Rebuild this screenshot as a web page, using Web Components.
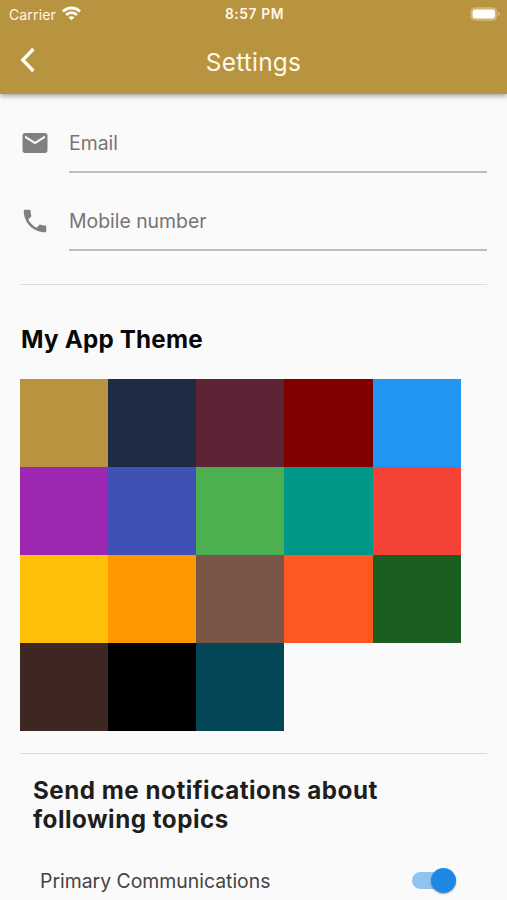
<!DOCTYPE html>
<html lang="en">
<head>
<meta charset="utf-8">
<title>Settings</title>
<style>
  body {
      margin: 0;
      background-color: #fafafa;
      font-family: Inter, "Liberation Sans", sans-serif;
      overflow: hidden;
  }
</style>
</head>
<body>
<settings-page></settings-page>
<script>
function makeTemplate(html) {
    const template = document.createElement("template");
    template.innerHTML = html;
    return template;
}

class BaseElement extends HTMLElement {
    constructor() {
        super();
        this.attachShadow({ mode: "open" });
        this.shadowRoot.append(this.constructor.template.content.cloneNode(true));
    }
}

class StatusBar extends BaseElement {
    static template = makeTemplate(`
        <style>
          :host {
              display: grid;
              grid-template-columns: 1fr auto 1fr;
              align-items: center;
              height: 27px;
              padding: 0 7px 0 9px;
              color: #fff8e8;
              font-size: 14px;
              line-height: 27px;
          }

          .carrier {
              display: flex;
              align-items: center;
              gap: 6px;
              letter-spacing: 0.14px;
          }

          .carrier svg {
              margin-bottom: 1px;
          }

          .time {
              padding-top: 1px;
              font-weight: 600;
              font-size: 13.8px;
              letter-spacing: 0.6px;
          }

          .battery {
              justify-self: end;
              margin-bottom: 1px;
          }

          svg {
              display: block;
          }
        </style>
        <div class="carrier">
          <span>Carrier</span>
          <svg width="19" height="15" viewBox="0 0 19 15" fill="none" stroke="#fffdf4" stroke-width="2.8">
            <path d="M1 5.6C5.8.8 13.2.8 18 5.6"/>
            <path d="M4.1 8.9C7.1 5.9 11.9 5.9 14.9 8.9"/>
            <path d="M9.5 14.2 6.5 11.2C8.1 9.8 10.9 9.8 12.5 11.2Z" fill="#fffdf4" stroke="none"/>
          </svg>
        </div>
        <span class="time">8:57 PM</span>
        <svg class="battery" width="30" height="14" viewBox="0 0 30 14">
          <rect x=".8" y=".7" width="26" height="12.6" rx="4" fill="#d2b373" stroke="#d2b373" stroke-width="1"/>
          <rect x="2.6" y="2.5" width="22.4" height="9" rx="2.4" fill="#fffefa"/>
          <path d="M28.2 5C30.2 5.6 30.2 8.4 28.2 9Z" fill="#d8bf8c"/>
        </svg>
    `);
}

class AppBar extends BaseElement {
    static template = makeTemplate(`
        <style>
          :host {
              display: block;
              height: 94px;
              background-color: #b99440;
              box-shadow: 0 2px 5px rgba(0, 0, 0, 0.36);
          }

          .toolbar {
              display: grid;
              grid-template-columns: 1fr auto 1fr;
              align-items: center;
              height: 67px;
              padding: 0 20px;
              box-sizing: border-box;
          }

          h1 {
              margin: 2px 0 0;
              color: #fffaec;
              font-size: 24.4px;
              font-weight: 400;
              line-height: 30px;
              letter-spacing: 0.25px;
          }

          svg {
              display: block;
              margin-bottom: 2px;
          }
        </style>
        <status-bar></status-bar>
        <div class="toolbar">
          <svg width="16" height="26" viewBox="0 0 16 26" fill="none" stroke="#fffdf5" stroke-width="3.4">
            <path d="M13.4 2 2.8 13 13.4 24"/>
          </svg>
          <h1><slot></slot></h1>
        </div>
    `);
}

class InputField extends BaseElement {
    static template = makeTemplate(`
        <style>
          :host {
              display: flex;
              height: 78px;
          }

          .icon {
              flex: none;
              width: 49px;
              padding-top: 33px;
              box-sizing: border-box;
          }

          .label {
              flex: 1;
              box-sizing: border-box;
              padding-top: 35px;
              border-bottom: 2px solid #bebebe;
              color: #757575;
              font-size: 19.4px;
              line-height: 26px;
          }
        </style>
        <div class="icon"><slot name="icon"></slot></div>
        <div class="label"><slot></slot></div>
    `);
}

class ColorGrid extends BaseElement {
    static template = makeTemplate(`
        <style>
          :host {
              display: grid;
              grid-template-columns: repeat(5, 88.05px);
              grid-auto-rows: 87.9px;
              padding-left: 0.35px;
          }
        </style>
    `);

    connectedCallback() {
        for (const color of this.getAttribute("colors").split(" ")) {
            const swatch = document.createElement("div");
            swatch.style.backgroundColor = color;
            this.shadowRoot.append(swatch);
        }
    }
}

class TopicSwitch extends BaseElement {
    static template = makeTemplate(`
        <style>
          :host {
              display: flex;
              justify-content: space-between;
              align-items: center;
              height: 40px;
              padding: 0 31px 0 20px;
              color: #444;
              font-size: 19.4px;
          }

          .text {
              padding-top: 1px;
          }

          .track {
              display: flex;
              justify-content: flex-end;
              align-items: center;
              width: 44px;
              height: 17px;
              border-radius: 9px;
              background-color: #8fc3f2;
          }

          .thumb {
              width: 25px;
              height: 25px;
              border-radius: 50%;
              background-color: #1e88e5;
              box-shadow: 0 1px 2px rgba(0, 0, 0, 0.35);
          }
        </style>
        <span class="text"><slot></slot></span>
        <div class="track"><div class="thumb"></div></div>
    `);
}

class SettingsPage extends BaseElement {
    static template = makeTemplate(`
        <style>
          :host {
              display: block;
              height: 900px;
              overflow: hidden;
          }

          main {
              padding: 1px 20px 0;
          }

          .icon {
              display: block;
              width: 30px;
              height: 30px;
              fill: #808080;
          }

          hr {
              height: 1px;
              margin: 0;
              border: none;
              background-color: #dcdcdc;
          }

          h2 {
              margin: 0;
              font-size: 24.2px;
              font-weight: 700;
              line-height: 29.4px;
          }

          .theme {
              padding: 40px 0 24px 1px;
              color: #080808;
              line-height: 30px;
              letter-spacing: 0.2px;
          }

          .topics {
              padding: 22px 60px 26px 13px;
              color: #1e1e1e;
              letter-spacing: 0.5px;
          }
        </style>
        <app-bar>Settings</app-bar>
        <main>
          <input-field>
            <svg class="icon" slot="icon" viewBox="0 0 24 24"><path d="M20 4H4c-1.1 0-1.99.9-1.99 2L2 18c0 1.1.9 2 2 2h16c1.1 0 2-.9 2-2V6c0-1.1-.9-2-2-2zm0 4l-8 5-8-5V6l8 5 8-5v2z"/></svg>
            <span class="email">Email</span>
          </input-field>
          <input-field>
            <svg class="icon" slot="icon" viewBox="0 0 24 24"><path d="M6.62 10.79c1.44 2.83 3.76 5.14 6.59 6.59l2.2-2.2c.27-.27.67-.36 1.02-.24 1.12.37 2.33.57 3.57.57.55 0 1 .45 1 1V20c0 .55-.45 1-1 1-9.39 0-17-7.61-17-17 0-.55.45-1 1-1h3.5c.55 0 1 .45 1 1 0 1.25.2 2.45.57 3.57.11.35.03.74-.25 1.02l-2.2 2.2z"/></svg>
            <span class="mobile">Mobile number</span>
          </input-field>
          <hr style="margin-top: 33px">
          <h2 class="theme">My App Theme</h2>
          <color-grid colors="#b99440 #1f2a44 #5c2434 #800000 #2196f3 #9c27b0 #3f51b5 #4caf50 #009688 #f44336 #ffc107 #ff9800 #795548 #ff5722 #1b5e20 #3e2723 #000000 #044655"></color-grid>
          <hr style="margin-top: 22px">
          <h2 class="topics">Send me notifications about following topics</h2>
          <topic-switch>Primary Communications</topic-switch>
        </main>
    `);
}

customElements.define("status-bar", StatusBar);
customElements.define("app-bar", AppBar);
customElements.define("input-field", InputField);
customElements.define("color-grid", ColorGrid);
customElements.define("topic-switch", TopicSwitch);
customElements.define("settings-page", SettingsPage);
</script>
</body>
</html>
